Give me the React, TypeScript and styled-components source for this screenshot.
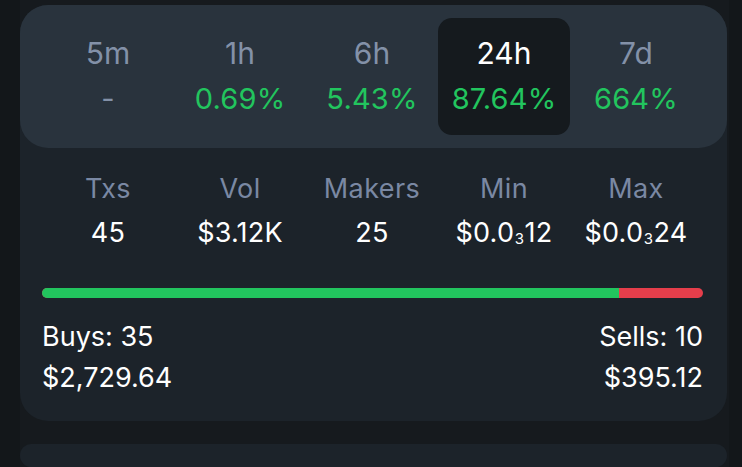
import React from "react";
import styled, { createGlobalStyle } from "styled-components";

const Global = createGlobalStyle`
  html, body { margin: 0; padding: 0; background: #13171a; }
  body { font-family: "Inter", "Liberation Sans", sans-serif; overflow: hidden; }
  * { box-sizing: border-box; }
`;

const Column = styled.div`
  margin-left: 20px;
  width: 709px;
  height: 467px;
  background: #161a1e;
  padding-top: 5px;
  display: flex;
  flex-direction: column;
  gap: 23px;
`;

const Card = styled.div`
  width: 707px;
  background: #1c232a;
  border-radius: 28px;
  display: flex;
  flex-direction: column;
`;

const NextCard = styled(Card)`
  height: 60px;
  border-radius: 30px;
`;

const TabPanel = styled.div`
  background: #29333d;
  border-radius: 28px;
  height: 143px;
  padding: 13px 24px 0 22px;
  display: grid;
  grid-template-columns: repeat(5, 132px);
  align-items: start;
`;

const Tab = styled.div<{ $active?: boolean }>`
  height: 117px;
  border-radius: 14px;
  background: ${(p) => (p.$active ? "#151a1e" : "transparent")};
  display: flex;
  flex-direction: column;
  align-items: center;
  padding-top: 17px;
`;

const TabLabel = styled.div<{ $active?: boolean }>`
  font-size: 30px;
  line-height: 37px;
  color: ${(p) => (p.$active ? "#ffffff" : "#8391a8")};
`;

const TabValue = styled.div<{ $muted?: boolean }>`
  margin-top: 9px;
  font-size: 29px;
  line-height: 36px;
  color: ${(p) => (p.$muted ? "#8391a8" : "#22c55e")};
  letter-spacing: 0.2px;
`;

const Stats = styled.div`
  padding: 24px 24px 0 22px;
  display: grid;
  grid-template-columns: repeat(5, 132px);
`;

const Stat = styled.div`
  display: flex;
  flex-direction: column;
  align-items: center;
`;

const StatLabel = styled.div`
  font-size: 27px;
  line-height: 34px;
  color: #7a88a3;
  letter-spacing: 0.4px;
`;

const StatValue = styled.div`
  margin-top: 10px;
  font-size: 27px;
  line-height: 34px;
  color: #ffffff;
  letter-spacing: 0.2px;
`;

const Sub = styled.span`
  font-size: 15px;
  position: relative;
  top: 2px;
  margin: 0 0.5px;
`;

const Bar = styled.div`
  margin: 34px 24px 0 22px;
  height: 10px;
  border-radius: 5px;
  overflow: hidden;
  display: flex;
  background: #e53e4b;
`;

const BarFill = styled.div`
  background: #22c55e;
  height: 100%;
`;

const Totals = styled.div`
  padding: 22px 24px 0 22px;
  display: flex;
  justify-content: space-between;
  height: 123px;
`;

const Side = styled.div<{ $right?: boolean }>`
  display: flex;
  flex-direction: column;
  align-items: ${(p) => (p.$right ? "flex-end" : "flex-start")};
  color: #ffffff;
  font-size: 27px;
  line-height: 34px;
  gap: 7px;
`;

const tabs = [
  { label: "5m", value: "-", muted: true },
  { label: "1h", value: "0.69%" },
  { label: "6h", value: "5.43%" },
  { label: "24h", value: "87.64%", active: true },
  { label: "7d", value: "664%" },
];

export default function App() {
  const buys = 35;
  const sells = 10;
  const pct = (2729.64 / (2729.64 + 395.12)) * 100;
  return (
    <>
      <Global />
      <Column>
        <Card>
          <TabPanel>
            {tabs.map((t) => (
              <Tab key={t.label} $active={t.active}>
                <TabLabel $active={t.active}>{t.label}</TabLabel>
                <TabValue $muted={t.muted}>{t.value}</TabValue>
              </Tab>
            ))}
          </TabPanel>
          <Stats>
            <Stat>
              <StatLabel>Txs</StatLabel>
              <StatValue>45</StatValue>
            </Stat>
            <Stat>
              <StatLabel>Vol</StatLabel>
              <StatValue>$3.12K</StatValue>
            </Stat>
            <Stat>
              <StatLabel>Makers</StatLabel>
              <StatValue>25</StatValue>
            </Stat>
            <Stat>
              <StatLabel>Min</StatLabel>
              <StatValue>
                $0.0<Sub>3</Sub>12
              </StatValue>
            </Stat>
            <Stat>
              <StatLabel>Max</StatLabel>
              <StatValue>
                $0.0<Sub>3</Sub>24
              </StatValue>
            </Stat>
          </Stats>
          <Bar>
            <BarFill style={{ width: `${pct}%` }} />
          </Bar>
          <Totals>
            <Side>
              <div>Buys: {buys}</div>
              <div>$2,729.64</div>
            </Side>
            <Side $right>
              <div>Sells: {sells}</div>
              <div>$395.12</div>
            </Side>
          </Totals>
        </Card>
        <NextCard />
      </Column>
    </>
  );
}
